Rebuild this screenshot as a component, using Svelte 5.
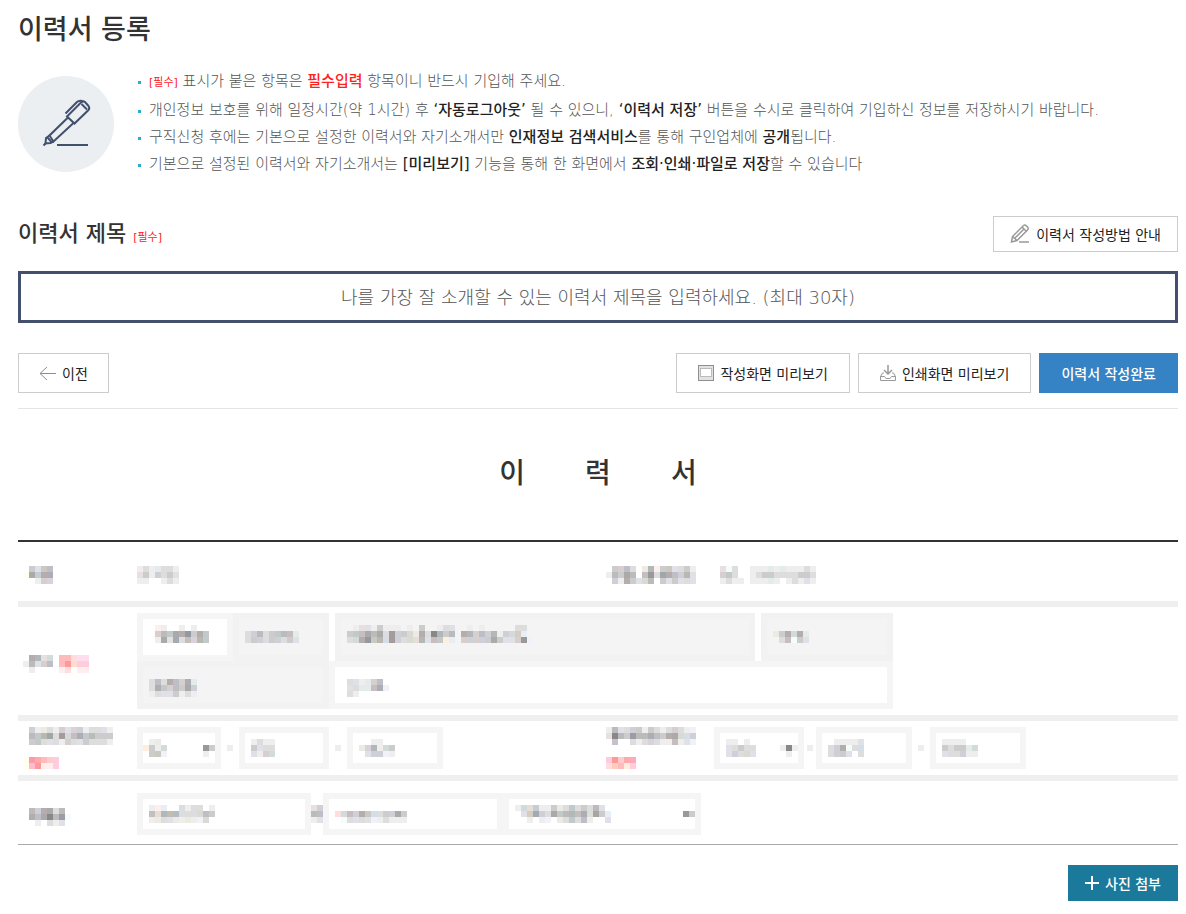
<script>
  // Masked values: one string per row of 6px cells, '.' leaves a cell empty
  const marks = {
    nameHead: ['', 'fff ccc dde ccb bbc', 'ffe aaa bcd baa aab fff', '. . eee dcc dcd'],
    name: ['', 'eee ddd eee dee ddd ddd eee', 'edd ccc eee ccd ddd ccc dde', 'eee eee . fff eee ddd eee'],
    birthHead: ['', '. ccc dcc bbc ddd . eed abb fee ccc ccb dde ddd ccc eee', 'eee bbb ccc aaa bbb . cbb 999 ddd 9aa baa bbc ccd bba dde', '. ccd eee baa ccc dde ddc bbb . ccc dde ccc dde ddd dde'],
    birth: ['', '. edd eff ddd . . eee eee eee dee eee dee eee eee eee ddd eee', '. dcc bcc ddd . . eee ddd ccc ccc ddd ddd ddd ddd ccc ccc ddd', '. eee ddd eee eee . eee eee eee dee eee fff eee ddd eee dde eee'],
    addrHead: ['', '. baa abb edd cdd . fbb fbb fdd fde fde', 'eee bbb dde dcc bbc . fbb f99 fdc fcd fcd', '. eee . . . . fee fdd . fee fee'],
    zipType: ['', '. . fee eee . . eee . eee', '. . dcc bbb bcc aaa baa 89a ccc baa bcc', '. . eee aaa edd 9ab ddd cbb dcd bba bcc'],
    zip: ['', '', '. ddd ccd bbb ddd ccc bcc bbb cbb dee', '. ddd ccc ccd ddd ccc ccd ddd ccc dde'],
    road: [
      '',
      '. . eee edd dde eee ccc eee eee eee . eee . ccc . . eee ddd dde . . eee . eee . . . . . ddd ddd',
      '. ccc bcc cbb aaa bbb aaa ddd a99 ccd ccc ddc eed baa ddd 888 abb ccc bbb . baa abb dcc bbc ccd abb eee ccd cdd dcb def',
      '. ddd cdd baa 89a ccb bba cde a99 ccd ddd ddc edc abb dde cbb bcc fed def . dcc ccd dcc ccd ccc aaa ccc dde dde dcc 999 eef'
    ],
    extra: ['', '', '. eed ccc baa cdd baa dee', '. . ddd cbb eff ccc dde'],
    detailHead: ['', '', '. ddd bbc ddd baa bbc dcc aab dee', '. ddd baa bcc dcc bbc ccc aaa ccd', '. eee ddd dde dde ccc eee ddd eee'],
    detail: ['', '', '. . ddd dde eee dee dcc bbc', '. . dde ddd dee dee cbb aab eef', '. . ddd eee'],
    phoneHead: [
      '. ccd eee eed ddd eee dcc dde dcd ccd eee ddd ddd dde eee',
      '. bbb bcc bba 9aa ddd a99 cdd cbb aab bcc bbb ccc ccc ccc',
      '. ccc bcc ddd dde ddd eee dcc ddd dde ccc ddd ddd ddd eee',
      '',
      '',
      'ffe f9a faa fbb fcc fcd',
      'ffe fbc f99 fee fee fcd'
    ],
    phone1: ['', '. eee eed', 'fed ccc eee cdd . . . . . . 999 ccc', '. ccc ccb eef . . . . . . eee'],
    phone2: ['', '. eee ddd eee eee', '. ccc dde ddd ddd', '. dde eee dcc cdd'],
    phone3: ['', '. . . eee eee', '. eed dcd abb eee cdd ccc', '. . dde ccd ccd eef eee'],
    cellHead: [
      'eee bbb dde ddd ccd ccc eee ccc ddd eee ddd dcc ddd eee eef',
      'edd 888 bbb ccc 99a bbb bbb aab bbc ccc baa aaa ddc cde ccd',
      '. cbc . . ddd eee ddd dcd ddd eee eee cbb eee dde eef',
      '',
      '',
      'fcd f99 fcc faa fab',
      'fdd fcb fbb fed fcd'
    ],
    cell1: ['', '. eee eee . eee', '. dde ddd ccc ddd ddd . . . . eee 888 eee', '. dde ccd ddd ddc dde . . . . . eee'],
    cell2: ['', '. . eee eee eee eee dde', '. ddd ccd baa eff ddd cde', '. ddd ccd ccc dde . ddd'],
    cell3: ['', '. eee eee eee eee', '. ccc ddd ccc ccc dee cdd', '. dde ddd ddd ccd eee eee'],
    emailHead: ['', '. bbb ccd baa aaa ddd bbb', 'fff baa bbc aaa 888 bbb 99a eff', '. . eee . ddd eee dde'],
    email: ['', '. eee fee def . . ddd eee ddd ddd . eee', '. cbb edc abb cba abc ddd ddd ddd ddc bbc ccc', '. eee eed ddd dde eed eee eed eee eef ddc'],
    at: ['', 'edd ccd', 'bbb bbc', 'eee dde'],
    host: ['', '', '. fdd cdd cbb ccd baa ccb cde ddd ccc ccd aaa ccc', '. . eff ddd dde ddd dde eef eee ddd eee eee eee'],
    hostPick: [
      '',
      '. eee cdd edc bcd eee eee ccc eed ddd bcc ddd ccc ddd bbb dde',
      '. . dde dcb 9ab ccd ddd aaa bcc bbb abb cbb aab ddd aa9 ccc def . . . . . . . . . . . . 999 ccc',
      '. . . eee . eee eef . eed ddd bcc ddd bbc eee . . dde'
    ],
    dash: ['', '', '', 'eee']
  }

  // greys keep only half of their tint, the reds (f..) stay as written
  function shade(code) {
    if (code[0] === 'f') return '#' + code
    const rgb = [...code].map((d) => parseInt(d, 16) * 17)
    const mean = (rgb[0] + rgb[1] + rgb[2]) / 3
    return `rgb(${rgb.map((v) => Math.round((v + mean) / 2)).join(',')})`
  }

  const cellsOf = (rows) =>
    rows.flatMap((row, y) =>
      row.split(' ').flatMap((c, x) => (c && c !== '.' ? [{ x, y, fill: shade(c) }] : []))
    )
  const widthOf = (rows) => Math.max(...rows.map((r) => r.split(' ').length)) * 6

  let title = $state('')
</script>

{#snippet mosaic(key)}
  <svg class="mosaic" width={widthOf(marks[key])} height={marks[key].length * 6} aria-hidden="true">
    {#each cellsOf(marks[key]) as c}
      <rect x={c.x * 6} y={c.y * 6} width="6" height="6" fill={c.fill} />
    {/each}
  </svg>
{/snippet}

{#snippet field(key, label, size, filled)}
  <label class="field {size}" class:filled>
    <input type="text" aria-label={label} readonly={filled} />
    {@render mosaic(key)}
  </label>
{/snippet}

{#snippet picker(key, label, size)}
  <label class="field {size}">
    <select aria-label={label}><option></option></select>
    {@render mosaic(key)}
  </label>
{/snippet}

<main>
  <h1>이력서 등록</h1>

  <section class="guide">
    <div class="badge">
      <svg width="96" height="96" viewBox="0 0 96 96" fill="none" stroke="#43506d" stroke-width="2">
        <path d="M49 40.500 L63 26.500 Q65 24.500 67 26 L70.500 30 Q72 32 70.500 34 L56.500 47.500 Z" />
        <path d="M47.500 37.500 L59 26 Q61 24 64.500 25 M63.500 28 L69 33.500" />
        <path d="M50 41.500 L31.500 59.500 L35.500 65.500 L55.500 47" />
        <path d="M31.500 59.500 L28 62 L27.500 67.500 L32.500 67 L35.500 65.500 M29 61 L34 66.500" />
        <path d="M28 67 L25.500 69.500" />
        <path d="M39 69 H70" />
      </svg>
    </div>
    <ul>
      <li><span class="req">[필수]</span> 표시가 붙은 항목은 <em>필수입력</em> 항목이니 반드시 기입해 주세요.</li>
      <li>개인정보 보호를 위해 일정시간(약 1시간) 후 <b>‘자동로그아웃’</b> 될 수 있으니, <b>‘이력서 저장’</b> 버튼을 수시로 클릭하여 기입하신 정보를 저장하시기 바랍니다.</li>
      <li>구직신청 후에는 기본으로 설정한 이력서와 자기소개서만 <b>인재정보 검색서비스</b>를 통해 구인업체에 <b>공개</b>됩니다.</li>
      <li>기본으로 설정된 이력서와 자기소개서는 <b>[미리보기]</b> 기능을 통해 한 화면에서 <b>조회·인쇄·파일로 저장</b>할 수 있습니다</li>
    </ul>
  </section>

  <div class="heading">
    <h2><label for="title">이력서 제목</label> <span class="req">[필수]</span></h2>
    <button class="btn small">
      <svg width="20" height="20" viewBox="0 0 20 20" fill="none" stroke="#999" stroke-width="1.500">
        <path d="M1.500 18 L2.500 12.500 L13.500 1.500 Q15 .5 16.500 2 L17.500 3 Q19 4.500 17.500 6 L7 16.500 Z" />
        <path d="M2.500 12.500 L7 16.500 M12 3 L16.500 7.500 M4.500 14.500 L14.500 4.500 M9 18 H19" />
      </svg>
      이력서 작성방법 안내
    </button>
  </div>

  <input id="title" class="title" type="text" maxlength="30" bind:value={title} placeholder="나를 가장 잘 소개할 수 있는 이력서 제목을 입력하세요. (최대 30자)" />

  <div class="toolbar">
    <button class="btn back">
      <svg width="17" height="14" viewBox="0 0 17 14" fill="none" stroke="#8c8c9c">
        <path d="M1 7.500 H17 M8 1 L1 7.500 L8 14" />
      </svg>
      이전
    </button>
    <button class="btn">
      <svg width="16" height="16" viewBox="0 0 16 16" fill="none">
        <rect x=".5" y=".5" width="15" height="15" fill="#e2e2e2" stroke="#8f8f8f" />
        <rect x="2.500" y="3.500" width="11" height="8" fill="#fff" stroke="#bbb" />
      </svg>
      작성화면 미리보기
    </button>
    <button class="btn">
      <svg width="16" height="16" viewBox="0 0 16 16" fill="none" stroke="#999">
        <path d="M8 0 V8.500 M4 5 L8 9 L12 5" stroke-width="1.500" />
        <path d="M4 8 H2.500 L.5 11.500 V15.500 H15.500 V11.500 L13.500 8 H12 M.5 11.500 H4.500 L6 13.500 H10 L11.500 11.500 H15.500" />
      </svg>
      인쇄화면 미리보기
    </button>
    <button class="btn primary">이력서 작성완료</button>
  </div>

  <h2 class="doc-title"><span>이</span><span>력</span><span>서</span></h2>

  <table>
    <colgroup>
      <col class="head" />
      <col />
      <col class="head second" />
      <col />
    </colgroup>
    <tbody>
      <tr class="plain">
        <th aria-label="성명">{@render mosaic('nameHead')}</th>
        <td>{@render mosaic('name')}</td>
        <th aria-label="성별, 생년월일">{@render mosaic('birthHead')}</th>
        <td>{@render mosaic('birth')}</td>
      </tr>
      <tr class="address">
        <th aria-label="주소">{@render mosaic('addrHead')}</th>
        <td colspan="3">
          <div class="line tall">
            <div class="field w96">
              <button aria-label="우편번호"></button>
              {@render mosaic('zipType')}
            </div>
            {@render field('zip', '우편번호', 'w96', true)}
            <span class="space"></span>
            {@render field('road', '기본주소', 'w420', true)}
            <span class="space"></span>
            {@render field('extra', '참고항목', 'w132', true)}
          </div>
          <div class="line tall">
            {@render field('detailHead', '건물명', 'w192', true)}
            {@render field('detail', '상세주소', 'w564', false)}
          </div>
        </td>
      </tr>
      <tr class="phones">
        <th aria-label="전화번호">{@render mosaic('phoneHead')}</th>
        <td>
          <div class="line">
            {@render picker('phone1', '국번', 'w84')}
            <span class="dash">{@render mosaic('dash')}</span>
            {@render field('phone2', '전화 앞자리', 'w90', false)}
            <span class="dash">{@render mosaic('dash')}</span>
            {@render field('phone3', '전화 뒷자리', 'w96', false)}
          </div>
        </td>
        <th aria-label="휴대전화">{@render mosaic('cellHead')}</th>
        <td>
          <div class="line">
            {@render picker('cell1', '통신사 번호', 'w90')}
            <span class="dash narrow">{@render mosaic('dash')}</span>
            {@render field('cell2', '휴대전화 앞자리', 'w96', false)}
            <span class="dash">{@render mosaic('dash')}</span>
            {@render field('cell3', '휴대전화 뒷자리', 'w96', false)}
          </div>
        </td>
      </tr>
      <tr class="email">
        <th aria-label="이메일">{@render mosaic('emailHead')}</th>
        <td colspan="3">
          <div class="line">
            {@render field('email', '이메일 아이디', 'w174', false)}
            <span class="at">{@render mosaic('at')}</span>
            {@render field('host', '이메일 도메인', 'w180', false)}
            {@render picker('hostPick', '도메인 선택', 'w198')}
          </div>
        </td>
      </tr>
    </tbody>
  </table>

  <div class="attach">
    <button class="btn small photo">
      <svg width="14" height="14" viewBox="0 0 14 14" stroke="#fff" stroke-width="2"><path d="M0 7 H14 M7 0 V14" /></svg>
      사진 첨부
    </button>
  </div>
</main>

<style>
  :global(body) {
    background: #fff;
  }

  main {
    padding: 10px 8px 13px 18px;
    color: #333;
    font-family: 'DejaVu Sans', 'Noto Sans CJK KR', sans-serif;
    font-size: 15px;
  }

  h1,
  h2 {
    margin: 0;
    font-weight: 500;
  }

  h1 {
    font-size: 27px;
    line-height: 40px;
  }

  svg {
    display: block;
    flex: none;
  }

  .guide {
    display: flex;
    align-items: flex-start;
    gap: 24px;
    padding-top: 18px;
  }

  .badge {
    margin-top: 8px;
    border-radius: 50%;
    background: #ebeff2;
  }

  ul {
    margin: 0;
    padding: 0;
    list-style: none;
    color: #555;
    font-weight: 300;
    line-height: 27px;
  }

  li {
    padding-left: 11px;
    background: linear-gradient(#2fa9d0, #2fa9d0) 0 13px / 3px 3px no-repeat;
  }

  li:first-child {
    margin-bottom: 2px;
  }

  li b {
    color: #222;
    font-weight: 500;
  }

  li em {
    color: #f22;
    font-style: normal;
    font-weight: 500;
  }

  .req {
    color: #f22;
    font-size: 11px;
    font-weight: 400;
    line-height: 11px;
  }

  .heading {
    display: flex;
    align-items: center;
    justify-content: space-between;
    margin-top: 38px;
  }

  .heading h2 {
    font-size: 22px;
    line-height: 36px;
  }

  .btn {
    display: flex;
    align-items: center;
    gap: 6px;
    box-sizing: border-box;
    height: 40px;
    padding: 0 21px;
    border: 1px solid #ccc;
    background: #fff;
    color: #222;
    font-family: inherit;
    font-size: 14px;
    font-weight: 400;
    white-space: nowrap;
  }

  .btn.small {
    height: 36px;
    padding: 0 16px;
  }

  .btn.primary {
    border-color: #3583c4;
    background: #3583c4;
    color: #fff;
    font-weight: 500;
  }

  .btn.photo {
    border-color: #1b7a9b;
    background: #1b7a9b;
    color: #fff;
    font-weight: 500;
  }

  .title {
    display: block;
    box-sizing: border-box;
    width: 100%;
    height: 52px;
    margin-top: 19px;
    padding: 0 20px;
    border: 3px solid #43506d;
    border-radius: 0;
    color: #333;
    font-family: inherit;
    font-size: 18px;
    font-weight: 300;
    text-align: center;
  }

  .title::placeholder {
    color: #555;
  }

  .toolbar {
    display: flex;
    gap: 8px;
    padding: 30px 0 15px;
    border-bottom: 1px solid #e5e5e5;
  }

  .btn.back {
    margin-right: auto;
    padding: 0 20px;
  }

  .doc-title {
    display: flex;
    justify-content: center;
    gap: 60px;
    padding: 45px 0 46px;
    font-size: 28px;
    line-height: 40px;
  }

  table {
    width: 100%;
    border-collapse: collapse;
    border-top: 2px solid #333;
    border-bottom: 1px solid #aaa;
    table-layout: fixed;
  }

  /* separators are drawn inside the row so the rules keep their full height */
  tr:not(:last-child) > * {
    box-shadow: inset 0 -6px #efefef;
    padding-bottom: 6px;
  }

  .head {
    width: 109px;
  }

  .head.second {
    width: 103px;
  }

  th,
  td {
    padding: 0 0 0 10px;
    text-align: left;
    vertical-align: middle;
  }

  th {
    padding-left: 5px;
  }

  .plain {
    height: 66px;
  }

  .address {
    height: 114px;
  }

  .phones {
    height: 60px;
  }

  .email {
    height: 63px;
  }

  .email > * {
    padding-top: 4px;
  }

  .line {
    display: flex;
    height: 42px;
  }

  .line.tall {
    height: 48px;
  }

  .mosaic {
    shape-rendering: crispEdges;
    pointer-events: none;
  }

  .field {
    display: grid;
    flex: none;
  }

  .field > :global(*) {
    grid-area: 1 / 1;
  }

  .field .mosaic {
    margin: 6px;
  }

  .field input,
  .field select,
  .field button {
    box-sizing: border-box;
    width: 100%;
    height: 100%;
    padding: 0 6px;
    border: 6px solid #f5f5f5;
    border-radius: 0;
    background: #fff;
    appearance: none;
  }

  .filled input {
    border-color: #f2f2f2;
    background: #f4f4f4;
  }

  .w84 { width: 84px; }
  .w90 { width: 90px; }
  .w96 { width: 96px; }
  .w132 { width: 132px; }
  .w174 { width: 174px; }
  .w180 { width: 180px; }
  .w192 { width: 192px; }
  .w198 { width: 198px; }
  .w420 { width: 420px; }
  .w564 { width: 564px; }

  .space {
    width: 6px;
  }

  .dash {
    display: flex;
    justify-content: center;
    width: 18px;
  }

  .dash.narrow,
  .at {
    width: 12px;
  }

  .at {
    padding-top: 6px;
  }

  .attach {
    display: flex;
    justify-content: flex-end;
    padding-top: 20px;
  }
</style>
